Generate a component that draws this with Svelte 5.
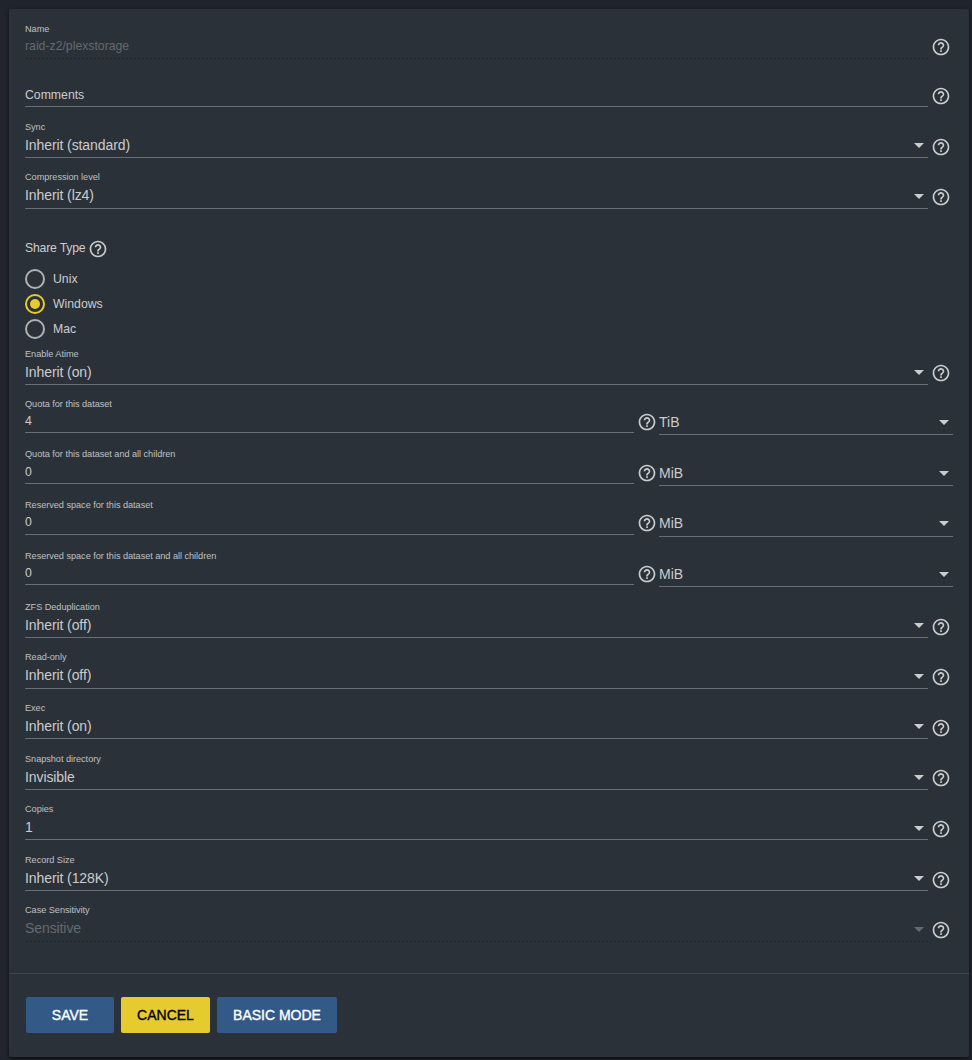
<script>
  const top = [
    { label: 'Sync', value: 'Inherit (standard)' },
    { label: 'Compression level', value: 'Inherit (lz4)' },
  ];
  const shares = ['Unix', 'Windows', 'Mac'];
  let share = $state('Windows');
  const sizes = [
    { label: 'Quota for this dataset', value: '4', unit: 'TiB' },
    { label: 'Quota for this dataset and all children', value: '0', unit: 'MiB' },
    { label: 'Reserved space for this dataset', value: '0', unit: 'MiB' },
    { label: 'Reserved space for this dataset and all children', value: '0', unit: 'MiB' },
  ];
  const bottom = [
    { label: 'ZFS Deduplication', value: 'Inherit (off)' },
    { label: 'Read-only', value: 'Inherit (off)' },
    { label: 'Exec', value: 'Inherit (on)' },
    { label: 'Snapshot directory', value: 'Invisible' },
    { label: 'Copies', value: '1' },
    { label: 'Record Size', value: 'Inherit (128K)' },
    { label: 'Case Sensitivity', value: 'Sensitive', disabled: true },
  ];
</script>

{#snippet help()}
  <svg class="help" viewBox="0 0 24 24" width="20" height="20"><path d="M11 18h2v-2h-2v2zm1-16C6.48 2 2 6.48 2 12s4.48 10 10 10 10-4.48 10-10S17.52 2 12 2zm0 18c-4.410 0-8-3.590-8-8s3.590-8 8-8 8 3.590 8 8-3.590 8-8 8zm0-14c-2.210 0-4 1.790-4 4h2c0-1.100.9-2 2-2s2 .9 2 2c0 2-3 1.750-3 5h2c0-2.250 3-2.500 3-5 0-2.210-1.790-4-4-4z" /></svg>
{/snippet}

{#snippet selectRow(f)}
  <div class="row" class:disabled={f.disabled}>
    <div class="field">
      <span class="label">{f.label}</span>
      <div class="select"><span>{f.value}</span><i class="arrow"></i></div>
    </div>
    {@render help()}
  </div>
{/snippet}

<main class="card">
  <form>
    <div class="row name disabled">
      <div class="field">
        <span class="label">Name</span>
        <div class="input">raid-z2/plexstorage</div>
      </div>
      {@render help()}
    </div>
    <div class="row comments">
      <div class="field"><div class="input">Comments</div></div>
      {@render help()}
    </div>
    {#each top as f}{@render selectRow(f)}{/each}

    <section class="share">
      <div class="share-title"><span>Share Type</span>{@render help()}</div>
      {#each shares as s}
        <button type="button" class="radio" class:on={share === s} onclick={() => (share = s)}>
          <i class="ring"></i><span>{s}</span>
        </button>
      {/each}
    </section>

    {@render selectRow({ label: 'Enable Atime', value: 'Inherit (on)' })}

    <div class="sizes">
      {#each sizes as f}
        <div class="size-row">
          <div class="field">
            <span class="label">{f.label}</span>
            <div class="input">{f.value}</div>
          </div>
          {@render help()}
          <div class="field unit"><div class="select"><span>{f.unit}</span><i class="arrow"></i></div></div>
        </div>
      {/each}
    </div>

    {#each bottom as f}{@render selectRow(f)}{/each}
  </form>

  <footer>
    <button class="btn save">SAVE</button>
    <button class="btn cancel">CANCEL</button>
    <button class="btn basic">BASIC MODE</button>
  </footer>
</main>

<style>
  :global(body) {
    background: #20242c;
  }
  :global(#app) {
    overflow: hidden;
    height: 1060px;
  }
  * {
    box-sizing: border-box;
  }
  .card {
    margin: 9px 3px 3px 9px;
    height: 1048px;
    background: #2b3138;
    border-radius: 2px;
    box-shadow: 0 2px 3px rgba(0, 0, 0, 0.4), 0 1px 5px rgba(0, 0, 0, 0.25);
    color: #cbcccd;
    font: 14px/20px "Liberation Sans", Arial, sans-serif;
    display: flex;
    flex-direction: column;
  }
  form {
    height: 964px;
    padding: 0 16px;
  }
  .row {
    height: 50.625px;
    display: flex;
    align-items: flex-end;
    gap: 3px;
  }
  .field {
    flex: none;
    width: 903px;
    height: 37.25px;
    display: flex;
    flex-direction: column;
    justify-content: space-between;
    border-bottom: 1px solid #6b6f74;
  }
  .label {
    font-size: 9.19px;
    line-height: 12px;
    letter-spacing: -0.04px;
    color: #bfc1c3;
  }
  .share + .row .label {
    padding-top: 0.4px;
  }
  .select {
    display: flex;
    justify-content: space-between;
    align-items: center;
    height: 20px;
    margin-bottom: 2.13px;
    padding-right: 4px;
    letter-spacing: -0.09px;
  }
  .arrow {
    margin-top: 1.5px;
    border: 5px solid transparent;
    border-top-color: currentColor;
    border-bottom: 0;
  }
  .help {
    flex: none;
    fill: #cbcccd;
    margin-bottom: 1.35px;
  }
  .input {
    font-size: 12.25px;
    line-height: 16px;
    margin-bottom: 3.5px;
  }
  .disabled .field {
    border-bottom: 0;
    padding-bottom: 1.3px;
    background: radial-gradient(circle, #20252b 0.6px, transparent 0.9px) 0 100% / 4px 1px repeat-x;
  }
  .disabled .input,
  .disabled .select {
    color: #666a6f;
  }
  .row.name {
    height: 49.9px;
  }
  .name .field {
    height: 36px;
  }
  .name .help {
    margin-bottom: 2px;
  }
  .row.comments {
    height: 48.4px;
  }
  .comments .field {
    justify-content: flex-end;
  }
  .comments .input {
    margin-bottom: 2.8px;
  }
  .share {
    height: 125.5px;
    padding-top: 30px;
    font-size: 12.25px;
  }
  .share-title {
    display: flex;
    align-items: flex-start;
    gap: 3px;
    height: 28px;
  }
  .share-title span {
    width: 60px;
    white-space: nowrap;
    line-height: 19px;
    letter-spacing: -0.2px;
  }
  .share-title .help {
    margin-top: 0.5px;
  }
  .radio {
    display: flex;
    align-items: center;
    gap: 8px;
    height: 25px;
    padding: 0;
    border: 0;
    background: none;
    color: inherit;
    font: inherit;
  }
  .ring {
    width: 20px;
    height: 20px;
    border: 2px solid #afb1b3;
    border-radius: 50%;
    display: grid;
    place-items: center;
  }
  .on .ring {
    border-color: #e5cb30;
  }
  .on .ring::after {
    content: "";
    width: 10px;
    height: 10px;
    border-radius: 50%;
    background: #e5cb30;
  }
  .size-row {
    height: 50.625px;
    display: flex;
    align-items: flex-end;
  }
  .sizes {
    height: 202.65px;
    position: relative;
    top: -2px;
  }
  .size-row .field {
    width: 609px;
    height: 35.45px;
  }
  .size-row .input {
    margin-bottom: 3.2px;
  }
  .size-row .help {
    margin-left: 3px;
    margin-bottom: 1.1px;
  }
  .size-row .unit {
    width: 294px;
    margin: 0 0 -2px 2px;
    justify-content: flex-end;
  }
  .unit .select {
    margin-bottom: 2.3px;
    letter-spacing: 0;
  }
  footer {
    border-top: 1px solid #41464c;
    padding: 23px 17px;
    display: flex;
    gap: 7px;
  }
  .btn {
    height: 36px;
    padding: 0;
    border: 0;
    border-radius: 2px;
    font: 14px/36px "Liberation Sans", Arial, sans-serif;
    -webkit-text-stroke: 0.35px currentColor;
    color: #fff;
    background: #335a87;
  }
  .save {
    width: 88px;
  }
  .cancel {
    width: 89px;
    background: #e5cb30;
    color: #000;
  }
  .basic {
    width: 120px;
  }
</style>
